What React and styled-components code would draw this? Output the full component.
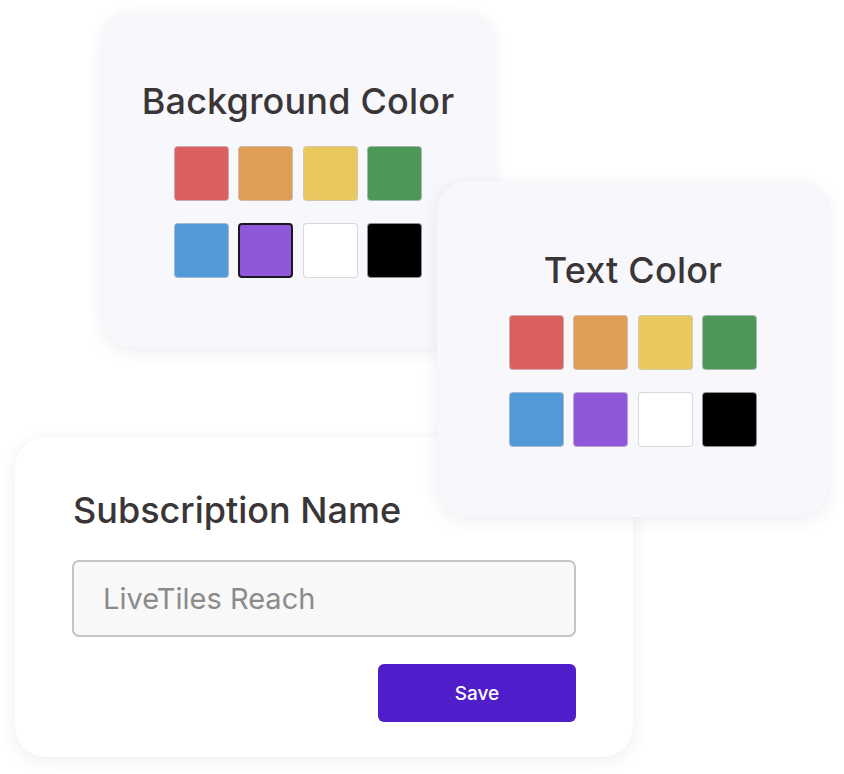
import React from "react";
import styled, { createGlobalStyle } from "styled-components";

const Global = createGlobalStyle`
  html, body { margin: 0; padding: 0; background: #ffffff; }
  body { font-family: Inter, "Liberation Sans", sans-serif; }
`;

const Canvas = styled.div`
  position: relative;
  width: 844px;
  height: 774px;
  overflow: hidden;
  background: #ffffff;
`;

const Card = styled.section`
  position: absolute;
  left: ${(p) => p.$x}px;
  top: ${(p) => p.$y}px;
  width: ${(p) => p.$w}px;
  height: ${(p) => p.$h}px;
  z-index: ${(p) => p.$z};
  box-sizing: border-box;
  background: ${(p) => p.$bg};
  border-radius: 30px;
  box-shadow: 0 4px 18px rgba(40, 40, 80, 0.07), 0 0 2px rgba(40, 40, 80, 0.04);
`;

const PaletteBody = styled.div`
  display: flex;
  flex-direction: column;
  align-items: center;
  padding-top: 67px;
`;

const Title = styled.h2`
  margin: 0;
  font-family: Inter, "Liberation Sans", sans-serif;
  font-weight: 500;
  font-size: 36px;
  line-height: 44px;
  letter-spacing: 0.2px;
  color: #3a3537;
`;

const SwatchGrid = styled.div`
  display: grid;
  grid-template-columns: repeat(4, 55px);
  grid-auto-rows: 55px;
  column-gap: 9.5px;
  row-gap: 22px;
  margin-top: 23px;
`;

const Swatch = styled.div`
  box-sizing: border-box;
  border-radius: 4px;
  background: ${(p) => p.$color};
  border: ${(p) => (p.$selected ? "2px solid #1b1725" : "1px solid rgba(200, 200, 210, 0.7)")};
`;

const FormBody = styled.div`
  display: flex;
  flex-direction: column;
  padding: 51px 57px 0 57px;
`;

const FormTitle = styled.h2`
  margin: 0 0 0 1px;
  font-family: Inter, "Liberation Sans", sans-serif;
  font-weight: 500;
  font-size: 36px;
  line-height: 44px;
  color: #3a3537;
`;

const NameInput = styled.div`
  box-sizing: border-box;
  margin-top: 28px;
  height: 77px;
  display: flex;
  align-items: center;
  padding-left: 29px;
  background: #f8f8f8;
  border: 2px solid #c4c4c4;
  border-radius: 7px;
  font-family: Inter, "Liberation Sans", sans-serif;
  font-size: 29px;
  color: #8b8b8b;
`;

const Actions = styled.div`
  display: flex;
  justify-content: flex-end;
  margin-top: 27px;
`;

const SaveButton = styled.button`
  width: 198px;
  height: 58px;
  border: none;
  border-radius: 6px;
  background: #4f1dca;
  color: #ffffff;
  font-family: Inter, "Liberation Sans", sans-serif;
  font-weight: 500;
  font-size: 19px;
  cursor: pointer;
`;

const COLORS = ["#d9605c", "#e09d55", "#e9c95d", "#4e9857", "#5299d8", "#9157db", "#ffffff", "#000000"];

function Palette({ title, selected }) {
  return (
    <PaletteBody>
      <Title>{title}</Title>
      <SwatchGrid>
        {COLORS.map((c, i) => (
          <Swatch key={c} $color={c} $selected={i === selected} />
        ))}
      </SwatchGrid>
    </PaletteBody>
  );
}

export default function App() {
  return (
    <>
      <Global />
      <Canvas>
        <Card $x={102} $y={12} $w={392} $h={336} $z={1} $bg="#f7f7fc">
          <Palette title="Background Color" selected={5} />
        </Card>
        <Card $x={15} $y={437} $w={618} $h={320} $z={2} $bg="#ffffff">
          <FormBody>
            <FormTitle>Subscription Name</FormTitle>
            <NameInput>LiveTiles Reach</NameInput>
            <Actions>
              <SaveButton>Save</SaveButton>
            </Actions>
          </FormBody>
        </Card>
        <Card $x={437} $y={181} $w={392} $h={336} $z={3} $bg="#f7f7fc">
          <Palette title="Text Color" selected={-1} />
        </Card>
      </Canvas>
    </>
  );
}
